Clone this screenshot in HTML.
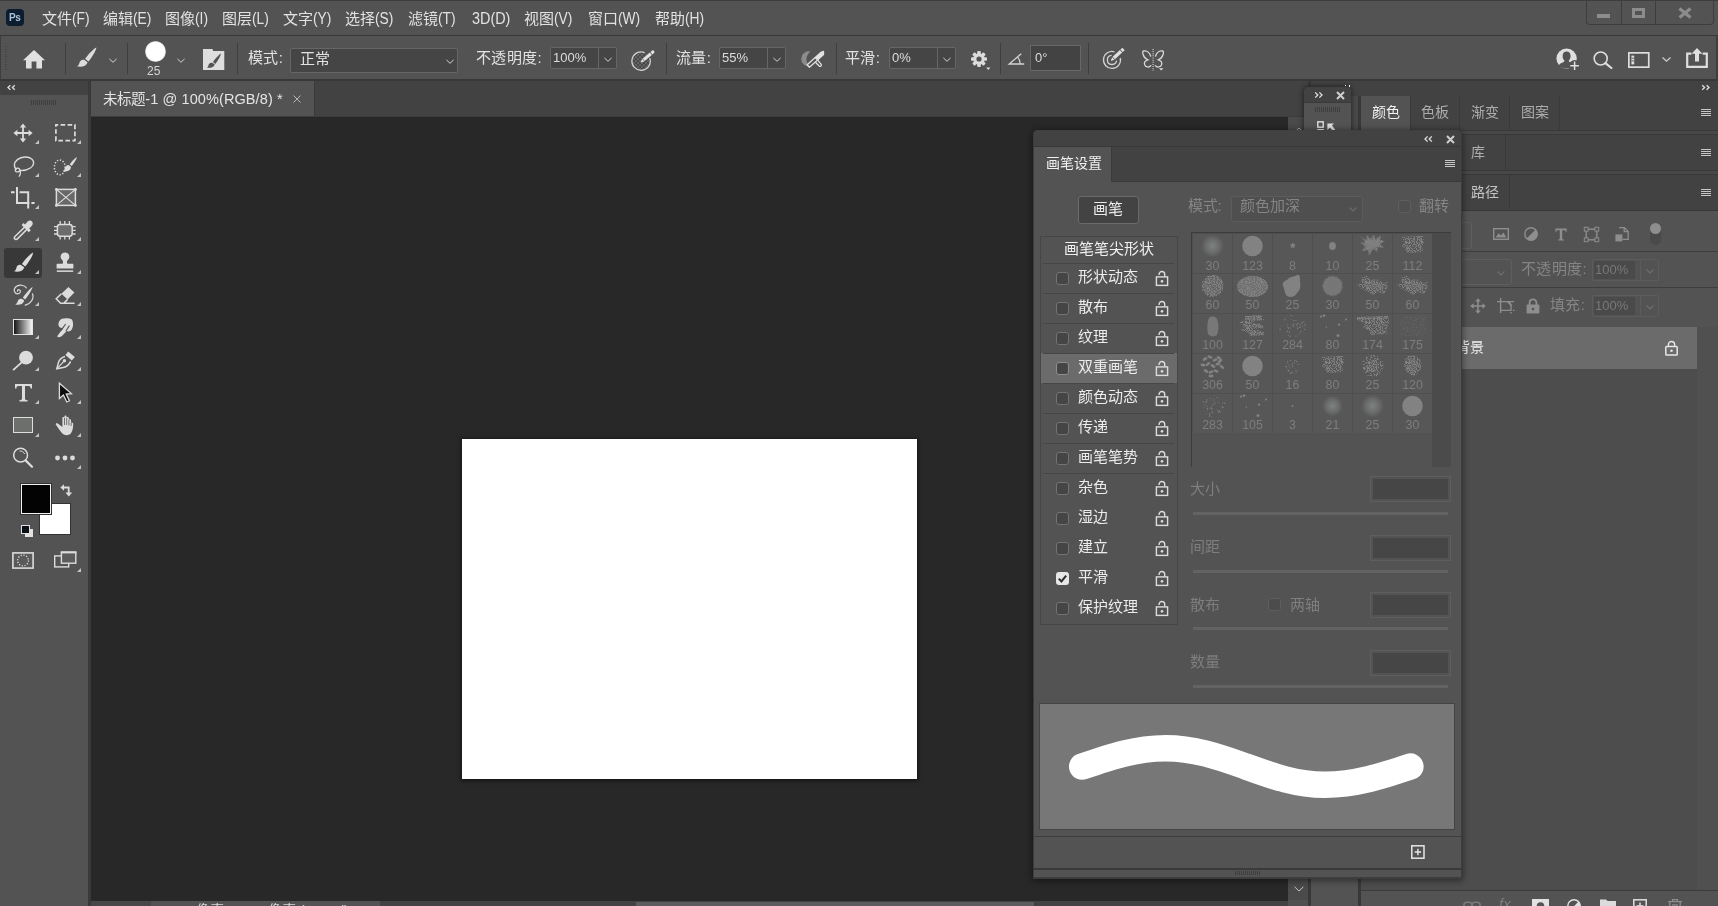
<!DOCTYPE html>
<html lang="zh-CN">
<head>
<meta charset="utf-8">
<title>未标题-1 @ 100%(RGB/8) *</title>
<style>
*{box-sizing:border-box;margin:0;padding:0}
html,body{width:1718px;height:906px;overflow:hidden;background:#535353}
body{font-family:"Liberation Sans",sans-serif;font-size:14px;color:#dcdcdc;position:relative;line-height:1}
#root{position:absolute;left:0;top:0;width:1718px;height:906px;will-change:transform;overflow:hidden}
.a{position:absolute}
.t{position:absolute;white-space:nowrap;line-height:16px;height:16px}
svg{position:absolute;overflow:visible}
/* ---------- top bars ---------- */
#menubar{left:0;top:0;width:1718px;height:36px;background:#535353;border-top:1px solid #3d3d3d;border-bottom:1px solid #383838}
#optbar{left:0;top:36px;width:1718px;height:45px;background:#535353;border-bottom:2px solid #383838;border-left:1px solid #3e3e3e;border-right:2px solid #3e3e3e}
.cj{font-size:15px;letter-spacing:.2px}
.la{display:inline-block;font-size:16px;transform:scaleX(.86);transform-origin:0 50%}
.mi{position:absolute;top:11px;line-height:16px;font-size:13px;color:#e2e2e2;white-space:nowrap}
.ol{font-size:15px;letter-spacing:.4px;color:#e2e2e2}
.sep{position:absolute;width:1px;background:#3e3e3e;top:43px;height:31px}
.fld{position:absolute;background:#454545;border:1px solid #666;border-radius:2px}
/* ---------- work area ---------- */
#tabstrip{left:0;top:81px;width:1718px;height:36px;background:#424242;border-bottom:1px solid #3c3c3c}
#canvas{left:91px;top:117px;width:1197px;height:784px;background:#282828}
#doc{left:462px;top:439px;width:455px;height:340px;background:#fff;box-shadow:0 1px 4px 1px rgba(0,0,0,.5)}
#tools{left:0;top:81px;width:88px;height:825px;background:#535353}
#toolsedge{left:88px;top:81px;width:3px;height:825px;background:#3a3a3a}
</style>
</head>
<body>
<div id="root">
<!-- ===== base chrome ===== -->
<div class="a" id="tabstrip"></div>
<div class="a" id="canvas"></div>
<div class="a" id="doc"></div>
<div class="a" id="tools"></div>
<div class="a" id="toolsedge"></div>
<div class="a" id="menubar"></div>
<div class="a" id="optbar"></div>
<!-- MENU -->
<div class="a" style="left:6px;top:9px;width:18px;height:17px;background:#0b1d2f;border-radius:4px"></div>
<div class="t" style="left:9px;top:10px;font-size:10px;font-weight:bold;color:#a9c3dc;letter-spacing:-0.3px">Ps</div>
<div class="mi" style="left:42px"><span class="cj">文件</span><span class="la">(F)</span></div>
<div class="mi" style="left:103px"><span class="cj">编辑</span><span class="la">(E)</span></div>
<div class="mi" style="left:165px"><span class="cj">图像</span><span class="la">(I)</span></div>
<div class="mi" style="left:222px"><span class="cj">图层</span><span class="la">(L)</span></div>
<div class="mi" style="left:283px"><span class="cj">文字</span><span class="la">(Y)</span></div>
<div class="mi" style="left:345px"><span class="cj">选择</span><span class="la">(S)</span></div>
<div class="mi" style="left:408px"><span class="cj">滤镜</span><span class="la">(T)</span></div>
<div class="mi" style="left:471.5px"><span class="la" style="transform:scaleX(.9)">3D(D)</span></div>
<div class="mi" style="left:524px"><span class="cj">视图</span><span class="la">(V)</span></div>
<div class="mi" style="left:588px"><span class="cj">窗口</span><span class="la">(W)</span></div>
<div class="mi" style="left:655px"><span class="cj">帮助</span><span class="la">(H)</span></div>
<div class="a" style="left:1586px;top:0;width:128px;height:25px;border:1px solid #3d3d3d;border-top:none;border-radius:0 0 4px 4px"></div>
<div class="a" style="left:1621px;top:1px;width:1px;height:23px;background:#3d3d3d"></div>
<div class="a" style="left:1655px;top:1px;width:1px;height:23px;background:#3d3d3d"></div>
<div class="a" style="left:1597px;top:14px;width:13px;height:4px;background:#8c8c8c"></div>
<div class="a" style="left:1632px;top:8px;width:13px;height:10px;border:3px solid #8c8c8c"></div>
<svg style="left:1678px;top:8px" width="14" height="10" viewBox="0 0 14 10"><path d="M1.5 0.5 L12.5 9.5 M12.5 0.5 L1.5 9.5" stroke="#8c8c8c" stroke-width="3.2" fill="none"/></svg>
<!-- OPTIONS -->
<div class="a" style="left:5px;top:46px;width:2px;height:25px;background:repeating-linear-gradient(#444 0 1px,transparent 1px 2.55px)"></div>
<svg style="left:23px;top:50px" width="22" height="19" viewBox="0 0 22 19"><path d="M11 0 L22 10.2 L19 10.2 L19 18.5 L13.4 18.5 L13.4 11.5 L8.6 11.5 L8.6 18.5 L3 18.5 L3 10.2 L0 10.2 Z" fill="#e0e0e0"/></svg>
<div class="sep" style="left:65px"></div>
<svg style="left:77px;top:47px" width="20" height="20" viewBox="0 0 20 20"><path d="M19.4 0.4 C16.8 1.4 11 7.4 8.1 11.8 L11.5 14.5 C14.7 10.6 19 3.8 19.4 0.4 Z M7.2 12.8 C4.8 12.2 2.8 13.8 2.4 16 C2.1 17.6 1.2 18.6 0 19.2 C3.4 20.2 8.4 19.7 10 16.5 C10.5 15.6 10.6 15.3 10.5 15.2 Z" fill="#dcdcdc"/></svg>
<svg style="left:108.5px;top:57.6px" width="8" height="5" viewBox="0 0 8 5"><path d="M0.4 0.9 L4 4.3 L7.6 0.9" stroke="#d2d2d2" stroke-width="1" fill="none"/></svg>
<div class="sep" style="left:127px"></div>
<div class="a" style="left:145px;top:41px;width:21px;height:21px;border-radius:50%;background:radial-gradient(circle,#fff 0 62%,rgba(255,255,255,.65) 70%,rgba(255,255,255,0) 74%)"></div>
<div class="t" style="left:147px;top:63px;font-size:12px;color:#d6d6d6">25</div>
<svg style="left:177px;top:57.6px" width="8" height="5" viewBox="0 0 8 5"><path d="M0.4 0.9 L4 4.3 L7.6 0.9" stroke="#d2d2d2" stroke-width="1" fill="none"/></svg>
<svg style="left:203px;top:49px" width="22" height="21" viewBox="0 0 22 21"><path d="M0 0 H9.4 L10.2 2 H21.3 V21 H0 Z" fill="#dedede"/><path d="M17.9 4.5 C16 5.6 12 10 10 13 L12.4 15 C14.6 12 17.6 7.4 17.9 4.5 Z M9.2 13.8 C7.4 13.4 5.8 14.6 5.5 16.2 C5.3 17.4 4.6 18 3.8 18.5 C6.4 19.2 10 18.8 11.3 16.4 C11.7 15.6 11.8 15.4 11.6 15.3 Z" fill="#535353"/></svg>
<div class="sep" style="left:237px"></div>
<div class="t ol" style="left:248px;top:50px">模式:</div>
<div class="fld" style="left:290px;top:48px;width:168px;height:25px"></div>
<div class="t ol" style="left:300px;top:51px">正常</div>
<svg style="left:446px;top:59px" width="8" height="5" viewBox="0 0 8 5"><path d="M0.4 0.9 L4 4.3 L7.6 0.9" stroke="#d2d2d2" stroke-width="1" fill="none"/></svg>
<div class="t ol" style="left:476px;top:50px">不透明度:</div>
<div class="fld" style="left:550px;top:47px;width:67px;height:22px"></div>
<div class="a" style="left:598px;top:48px;width:1px;height:20px;background:#666"></div>
<div class="t" style="left:553px;top:50px;font-size:13px">100%</div>
<svg style="left:604px;top:57px" width="8" height="5" viewBox="0 0 8 5"><path d="M0.4 0.9 L4 4.3 L7.6 0.9" stroke="#d2d2d2" stroke-width="1" fill="none"/></svg>
<svg style="left:631px;top:48px" width="24" height="23" viewBox="0 0 24 23"><defs><pattern id="chk" width="4" height="4" patternUnits="userSpaceOnUse"><rect width="4" height="4" fill="#4a4a4a"/><rect width="2" height="2" fill="#626262"/><rect x="2" y="2" width="2" height="2" fill="#626262"/></pattern></defs><circle cx="10.1" cy="13.1" r="8.8" fill="url(#chk)"/><path d="M18.81 10.13 A9.2 9.2 0 1 1 13.55 4.57" fill="none" stroke="#d2d2d2" stroke-width="1.3"/><path d="M9.5 14.6 L13.28 13.48 L11.2 11.04 Z" fill="#e6e6e6"/><path d="M13.74 13.09 L11.66 10.65 L18.81 4.53 L20.89 6.97 Z" fill="#e2e2e2"/><path d="M21.5 6.45 L19.42 4.01 L21.2 2.4 C22.4 1.6 24 3.4 23.2 4.8 Z" fill="#e2e2e2"/></svg>
<div class="sep" style="left:666px"></div>
<div class="t ol" style="left:676px;top:50px">流量:</div>
<div class="fld" style="left:719px;top:47px;width:67px;height:22px"></div>
<div class="a" style="left:767px;top:48px;width:1px;height:20px;background:#666"></div>
<div class="t" style="left:722px;top:50px;font-size:13px">55%</div>
<svg style="left:773px;top:57px" width="8" height="5" viewBox="0 0 8 5"><path d="M0.4 0.9 L4 4.3 L7.6 0.9" stroke="#d2d2d2" stroke-width="1" fill="none"/></svg>
<svg style="left:800px;top:49px" width="26" height="20" viewBox="0 0 26 20"><path d="M10.6 2.6 A7.54 7.54 0 1 0 9.6 17.4 A9.29 9.29 0 0 1 10.6 2.6 Z" fill="#8c8c8c"/><path d="M9.43 18.27 L7.17 15.73 L21.07 3.33 C22.6 2.2 24.4 4.4 23.33 5.87 Z" fill="none" stroke="#e2e2e2" stroke-width="1.3" stroke-linejoin="round"/><path d="M17.08 11.45 L14.82 8.91 L21.07 3.33 C22.6 2.2 24.4 4.4 23.33 5.87 Z" fill="#e2e2e2"/><path d="M15.4 13.2 L19.2 17 C20.4 18 22 16.6 21.2 15.4 L17.6 11.2" fill="none" stroke="#e2e2e2" stroke-width="1.3"/><circle cx="23.2" cy="2.8" r="1.1" fill="#e6e6e6"/></svg>
<div class="sep" style="left:836px"></div>
<div class="t ol" style="left:845px;top:50px">平滑:</div>
<div class="fld" style="left:889px;top:47px;width:67px;height:22px"></div>
<div class="a" style="left:937px;top:48px;width:1px;height:20px;background:#666"></div>
<div class="t" style="left:892px;top:50px;font-size:13px">0%</div>
<svg style="left:943px;top:57px" width="8" height="5" viewBox="0 0 8 5"><path d="M0.4 0.9 L4 4.3 L7.6 0.9" stroke="#d2d2d2" stroke-width="1" fill="none"/></svg>
<svg style="left:970px;top:50px" width="21" height="21" viewBox="0 0 21 21"><g transform="translate(9 9)" fill="#dcdcdc"><circle r="5.7"/><rect x="-1.8" y="-8" width="3.6" height="16" rx="1"/><rect x="-1.8" y="-8" width="3.6" height="16" rx="1" transform="rotate(45)"/><rect x="-1.8" y="-8" width="3.6" height="16" rx="1" transform="rotate(90)"/><rect x="-1.8" y="-8" width="3.6" height="16" rx="1" transform="rotate(135)"/><circle r="2.6" fill="#535353"/></g><path d="M16.2 17.6 H20.4 L18.3 20 Z" fill="#dcdcdc"/></svg>
<div class="sep" style="left:1000px"></div>
<svg style="left:1008px;top:53px" width="17" height="12" viewBox="0 0 17 12"><path d="M13.2 0.8 L1.2 11 H16.2" stroke="#d4d4d4" stroke-width="1.3" fill="none"/><path d="M9.6 4.2 C11.4 6 12.2 8.4 12.2 11" stroke="#d4d4d4" stroke-width="1.2" fill="none"/></svg>
<div class="a" style="left:1030px;top:45px;width:51px;height:26px;background:#434343;border:1px solid #676767"></div>
<div class="t" style="left:1035px;top:50px;font-size:13px">0°</div>
<div class="sep" style="left:1088px"></div>
<svg style="left:1102px;top:48px" width="23" height="22" viewBox="0 0 23 22"><path d="M12.48 3.77 A8.5 8.5 0 1 0 18.28 9.99" stroke="#d2d2d2" stroke-width="1.3" fill="none"/><path d="M9.6 7.32 A4.6 4.6 0 1 0 14.53 12.7" stroke="#d2d2d2" stroke-width="1.3" fill="none"/><path d="M8.7 12.95 L12.49 11.72 L10.16 9.24 Z" fill="#e4e4e4"/><path d="M13.00 11.24 L10.67 8.76 L17.86 1.99 L20.19 4.47 Z" fill="#e0e0e0"/><path d="M20.77 3.92 L18.44 1.44 L20.33 -0.34 L22.67 2.14 Z" fill="#e0e0e0"/></svg>
<svg style="left:1142px;top:48px" width="23" height="24" viewBox="0 0 23 24"><path d="M8.7 8.2 C7.8 5 5 2.6 1.6 3 C0.4 3.2 0.6 5.2 1.2 6.8 C2 9.2 3.4 11 5.8 11.8 C3.4 12.6 2 14.6 2.6 16.6 C3.4 19.2 7.2 20 8.8 17.6 M 13.5 8.2 C 14.4 5.0 17.2 2.6 20.6 3.0 C 21.8 3.2 21.6 5.2 21.0 6.8 C 20.2 9.2 18.8 11.0 16.4 11.8 C 18.8 12.6 20.2 14.6 19.6 16.6 C 18.8 19.2 15.0 20.0 13.4 17.6" stroke="#d8d8d8" stroke-width="1.3" fill="none" stroke-linecap="round"/><path d="M11.1 0.9 V23" stroke="#dcdcdc" stroke-width="1.1" stroke-dasharray="1 1.15" fill="none"/><path d="M17 20.3 H21.4 L19.2 22.6 Z" fill="#dcdcdc"/></svg>
<svg style="left:1556px;top:48px" width="24" height="23" viewBox="0 0 24 23"><circle cx="10.6" cy="10.6" r="10.2" fill="#e0e0e0"/><path d="M10.6 3.6 C13.2 3.6 14.6 5.6 14.6 8.2 C14.6 10 13.8 11.6 12.8 12.6 C12.8 13.6 13.4 14.2 15 14.8 C17 15.6 18 16.4 18.4 17.6 C16.4 19.6 13.6 20.4 10.6 20.4 C7.6 20.4 4.8 19.6 2.8 17.6 C3.2 16.4 4.2 15.6 6.2 14.8 C7.8 14.2 8.4 13.6 8.4 12.6 C7.4 11.6 6.6 10 6.6 8.2 C6.6 5.6 8 3.6 10.6 3.6 Z" fill="#535353"/><circle cx="18.6" cy="17.6" r="5.6" fill="#535353"/><path d="M18.6 13.4 V22 M14.3 17.7 H22.9" stroke="#e0e0e0" stroke-width="1.5"/></svg>
<svg style="left:1592.5px;top:51px" width="20" height="18" viewBox="0 0 20 18"><circle cx="7.7" cy="7.5" r="6.5" stroke="#dedede" stroke-width="1.6" fill="none"/><path d="M12.4 12.2 L18.4 17" stroke="#dedede" stroke-width="2.2" stroke-linecap="round"/></svg>
<svg style="left:1627.5px;top:51.8px" width="22" height="16" viewBox="0 0 22 16"><rect x="0.85" y="0.85" width="19.9" height="14.3" stroke="#dedede" stroke-width="1.7" fill="none"/><rect x="3.4" y="3.6" width="2.8" height="8.8" fill="#dedede"/><path d="M3.4 6.2 H6.2 M3.4 8.9 H6.2" stroke="#535353" stroke-width="0.9"/></svg>
<svg style="left:1662px;top:57px" width="9" height="5" viewBox="0 0 9 5"><path d="M0.5 0.5 L4.5 4.2 L8.5 0.5" stroke="#cfcfcf" stroke-width="1.2" fill="none"/></svg>
<svg style="left:1686px;top:47px" width="22" height="21" viewBox="0 0 22 21"><path d="M1.2 5.6 V19.8 H20.8 V5.6 M0.1 6.6 H5.4 M16.6 6.6 H21.9" stroke="#dedede" stroke-width="2.2" fill="none"/><path d="M11 1 L16.4 6.8 H13 V14.6 H9 V6.8 H5.6 Z" fill="#dedede"/></svg>
<!-- DOCTAB -->
<div class="a" style="left:91px;top:81px;width:224px;height:35px;background:#535353;border-right:1px solid #3a3a3a"></div>
<div class="t" style="left:103px;top:90.6px;color:#e4e4e4;font-size:14.5px;letter-spacing:.1px">未标题-1 @ 100%(RGB/8) *</div>
<svg style="left:293px;top:95px" width="8" height="8" viewBox="0 0 8 8"><path d="M0.5 0.5 L7.5 7.5 M7.5 0.5 L0.5 7.5" stroke="#b8b8b8" stroke-width="1" fill="none"/></svg>
<!-- TOOLS -->
<div class="a" style="left:0;top:81px;width:88px;height:14px;background:#424242"></div>
<svg style="left:7px;top:85px" width="9" height="5" viewBox="0 0 9 5"><path d="M3.4 0.3 L1 2.5 L3.4 4.7 M7.8 0.3 L5.4 2.5 L7.8 4.7" stroke="#e0e0e0" stroke-width="1.3" fill="none"/></svg>
<div class="a" style="left:31px;top:100px;width:25px;height:5px;background:repeating-linear-gradient(90deg,#3e3e3e 0 1px,transparent 1px 2px)"></div>
<div class="a" style="left:4px;top:247.5px;width:38px;height:30px;background:#383838;border-radius:3px"></div>
<svg style="left:13px;top:123px" width="20" height="20" viewBox="0 0 20 20"><path d="M10 0.4 L13.2 4.4 H10.9 V9.1 H15.6 V6.8 L19.6 10 L15.6 13.2 V10.9 H10.9 V15.6 H13.2 L10 19.6 L6.8 15.6 H9.1 V10.9 H4.4 V13.2 L0.4 10 L4.4 6.8 V9.1 H9.1 V4.4 H6.8 Z" fill="#dcdcdc"/></svg>
<svg style="left:35px;top:140px" width="4" height="4" viewBox="0 0 4 4"><path d="M4 0 V4 H0 Z" fill="#c4c4bc"/></svg>
<svg style="left:55px;top:124px" width="21" height="18" viewBox="0 0 21 18"><rect x="0.9" y="0.9" width="19" height="15.8" fill="none" stroke="#dcdcdc" stroke-width="1.7" stroke-dasharray="4.6 2.4" stroke-dashoffset="2.3"/></svg>
<svg style="left:77px;top:140px" width="4" height="4" viewBox="0 0 4 4"><path d="M4 0 V4 H0 Z" fill="#c4c4bc"/></svg>
<svg style="left:13px;top:156px" width="22" height="22" viewBox="0 0 22 22"><path d="M3.6 13.6 C0.6 11.4 0.4 6.8 4.4 3.6 C8.6 0.4 15.4 0.2 18.8 3 C21.8 5.6 21 9.6 17.4 12 C14 14.2 9.6 14.8 6.6 14.4" fill="none" stroke="#dcdcdc" stroke-width="1.4"/><path d="M6.8 14.2 C7 12.4 5 11.6 3.4 12.4 C1.8 13.2 1.8 15.2 3.4 15.8 C4.8 16.3 6.4 15.6 6.8 14.2 C7.6 16 8 18.4 5.8 20.6" fill="none" stroke="#dcdcdc" stroke-width="1.3"/></svg>
<svg style="left:35px;top:173px" width="4" height="4" viewBox="0 0 4 4"><path d="M4 0 V4 H0 Z" fill="#c4c4bc"/></svg>
<svg style="left:53px;top:156px" width="25" height="20" viewBox="0 0 25 20"><ellipse cx="6.8" cy="11.4" rx="5.4" ry="7.4" fill="none" stroke="#dcdcdc" stroke-width="1.5" stroke-dasharray="1.3 1.7"/><path d="M24 1 C22 2 18.6 5.6 16.8 8.4 L18.8 10 C20.8 7.4 23.4 3.6 24 1 Z M16 9.2 C14.2 8.8 12.8 10 12.4 11.6 C12.1 12.8 11.2 14.4 9.8 15.2 C12.8 16.2 16.4 15.2 17.6 12.8 C18 11.8 18 11 17.8 10.8 Z" fill="#dcdcdc"/></svg>
<svg style="left:77px;top:173px" width="4" height="4" viewBox="0 0 4 4"><path d="M4 0 V4 H0 Z" fill="#c4c4bc"/></svg>
<svg style="left:11px;top:187px" width="24" height="22" viewBox="0 0 24 22"><path d="M0 5.2 H3.6 M6 0 V16 H18.4 M8.6 5.2 H17.2 V21.4 M20.4 16 H23.6" fill="none" stroke="#dcdcdc" stroke-width="2"/></svg>
<svg style="left:35px;top:205px" width="4" height="4" viewBox="0 0 4 4"><path d="M4 0 V4 H0 Z" fill="#c4c4bc"/></svg>
<svg style="left:55px;top:188px" width="22" height="19" viewBox="0 0 22 19"><rect x="1.4" y="1.4" width="19" height="16" fill="#686868" stroke="#dcdcdc" stroke-width="1.5"/><path d="M1.4 1.4 L20.4 17.4 M20.4 1.4 L1.4 17.4" stroke="#dcdcdc" stroke-width="1.2"/><circle cx="1.4" cy="1.4" r="1.4" fill="#dcdcdc"/><circle cx="20.4" cy="1.4" r="1.4" fill="#dcdcdc"/><circle cx="1.4" cy="17.4" r="1.4" fill="#dcdcdc"/><circle cx="20.4" cy="17.4" r="1.4" fill="#dcdcdc"/></svg>
<svg style="left:13px;top:220px" width="21" height="20" viewBox="0 0 21 20"><path d="M11.4 7.4 L2.2 16.2 C1.2 17.2 1.2 18.4 1.8 19 C2.4 19.6 3.6 19.6 4.6 18.6 L13.6 9.6" fill="none" stroke="#dcdcdc" stroke-width="1.5"/><path d="M8.6 5 L10.6 3 L12 4.4 L14.4 1.8 C15.8 0.4 17.8 0.2 19 1.4 C20.2 2.6 20 4.6 18.6 6 L16.2 8.6 L17.8 10.2 L15.8 12.2 Z" fill="#dcdcdc"/></svg>
<svg style="left:35px;top:237px" width="4" height="4" viewBox="0 0 4 4"><path d="M4 0 V4 H0 Z" fill="#c4c4bc"/></svg>
<svg style="left:54px;top:221px" width="22" height="19" viewBox="0 0 22 19"><rect x="3.4" y="3.4" width="14.8" height="11.8" rx="2.6" fill="#6c6c6c" stroke="#dcdcdc" stroke-width="1.5"/><path d="M6.2 0 V3 M6.2 15.6 V18.6 M10.8 0 V3 M10.8 15.6 V18.6 M15.4 0 V3 M15.4 15.6 V18.6 M0 5.6 H3 M18.6 5.6 H21.6 M0 9.3 H3 M18.6 9.3 H21.6 M0 13 H3 M18.6 13 H21.6 " stroke="#dcdcdc" stroke-width="1.3"/></svg>
<svg style="left:77px;top:237px" width="4" height="4" viewBox="0 0 4 4"><path d="M4 0 V4 H0 Z" fill="#c4c4bc"/></svg>
<svg style="left:14px;top:252px" width="20" height="20" viewBox="0 0 20 20"><path d="M19.2 0.6 C16.6 1.6 10.8 7.6 7.9 12 L11.2 14.6 C14.4 10.6 18.8 4 19.2 0.6 Z M7 13 C4.8 12.4 2.8 13.8 2.4 16 C2.1 17.5 1.2 18.7 0 19.3 C3.4 20.2 8.2 19.7 9.7 16.6 C10.2 15.7 10.3 15.4 10.2 15.3 Z" fill="#dcdcdc"/></svg>
<svg style="left:35px;top:270px" width="4" height="4" viewBox="0 0 4 4"><path d="M4 0 V4 H0 Z" fill="#c4c4bc"/></svg>
<svg style="left:56px;top:252px" width="18" height="21" viewBox="0 0 18 21"><path d="M9 0.6 C11.6 0.6 13.4 2.4 13.4 4.8 C13.4 6.4 12.4 7.6 11.4 8.4 C10.8 9 10.8 10.4 11.4 11.8 H16.4 C17 11.8 17.4 12.2 17.4 12.8 V16.4 H0.6 V12.8 C0.6 12.2 1 11.8 1.6 11.8 H6.6 C7.2 10.4 7.2 9 6.6 8.4 C5.6 7.6 4.6 6.4 4.6 4.8 C4.6 2.4 6.4 0.6 9 0.6 Z" fill="#dcdcdc"/><rect x="0.8" y="18.4" width="16.4" height="1.5" fill="#dcdcdc"/></svg>
<svg style="left:77px;top:270px" width="4" height="4" viewBox="0 0 4 4"><path d="M4 0 V4 H0 Z" fill="#c4c4bc"/></svg>
<svg style="left:13px;top:284px" width="22" height="23" viewBox="0 0 22 23"><path d="M19.6 3 C17.6 4 12.4 9.8 9.8 13.8 L12.2 15.6 C15 11.8 19 5.8 19.6 3 Z M8.8 14.8 C6.8 14.2 5 15.6 4.6 17.4 C4.3 18.8 3.4 19.8 2.2 20.4 C5 21.2 9.2 20.8 10.6 18 C11.2 17 11.2 16.4 11 16.3 Z" fill="#dcdcdc"/><path d="M13.6 4.2 C11.6 0.8 5.6 0.2 2.6 3 C-0.2 5.8 1.6 9.8 4.8 9.8 C7.4 9.8 8.4 6.6 6.2 5.8 C4.8 5.4 4 6.8 4.8 7.6" fill="none" stroke="#dcdcdc" stroke-width="1.2"/><path d="M19.4 9.4 C21.4 14 18.4 19.8 11.8 21.4" fill="none" stroke="#dcdcdc" stroke-width="1.1"/></svg>
<svg style="left:35px;top:302px" width="4" height="4" viewBox="0 0 4 4"><path d="M4 0 V4 H0 Z" fill="#c4c4bc"/></svg>
<svg style="left:55px;top:286px" width="21" height="19" viewBox="0 0 21 19"><path d="M13.4 1 L19.4 6.6 L12.6 13.4 L6.4 7.8 Z" fill="#dcdcdc"/><path d="M6.4 7.8 L1.2 12.8 L5.6 17.2 H8.8 L12.6 13.4 M8.8 17.2 H19.6" fill="none" stroke="#dcdcdc" stroke-width="1.5"/></svg>
<svg style="left:77px;top:302px" width="4" height="4" viewBox="0 0 4 4"><path d="M4 0 V4 H0 Z" fill="#c4c4bc"/></svg>
<div class="a" style="left:13px;top:319px;width:20px;height:16px;border:1px solid #e4e4e4;background:linear-gradient(90deg,#151515,#f4f4f4)"></div>
<svg style="left:35px;top:335px" width="4" height="4" viewBox="0 0 4 4"><path d="M4 0 V4 H0 Z" fill="#c4c4bc"/></svg>
<svg style="left:56px;top:318px" width="18" height="20" viewBox="0 0 18 20"><path d="M6 0.8 C9 -0.2 13.6 0.2 16 1.4 C17.6 4.4 17.4 9.2 15.6 11.8 C14.4 13.4 12 14 10.8 13 L6.2 17.8 C4.8 19.4 2.6 19.6 1 18.6 L7.6 9.6 C5.2 10.6 3.2 9.6 2.6 7.6 C2 5 3.4 1.8 6 0.8 Z" fill="#dcdcdc"/><path d="M9.6 6 L5 12.6 M13.4 7.6 L9.8 13.2" stroke="#535353" stroke-width="1.1"/></svg>
<svg style="left:77px;top:335px" width="4" height="4" viewBox="0 0 4 4"><path d="M4 0 V4 H0 Z" fill="#c4c4bc"/></svg>
<svg style="left:12px;top:350px" width="22" height="21" viewBox="0 0 22 21"><circle cx="14" cy="7.7" r="6.9" fill="#dcdcdc"/><path d="M9.4 12.6 L1.6 19.6" stroke="#dcdcdc" stroke-width="1.9" stroke-linecap="round"/></svg>
<svg style="left:35px;top:367px" width="4" height="4" viewBox="0 0 4 4"><path d="M4 0 V4 H0 Z" fill="#c4c4bc"/></svg>
<svg style="left:56px;top:351px" width="20" height="19" viewBox="0 0 20 19"><path d="M12.2 0.6 L18.8 6 L15.8 9.4 L9.4 4 Z" fill="#dcdcdc"/><path d="M9 5.4 C5.6 6.2 3.4 8.6 2.4 11.6 L0.8 17.8 L7.2 16.6 C10.4 15.8 13.2 13.8 14.6 10.4" fill="none" stroke="#dcdcdc" stroke-width="1.5"/><path d="M1 17.6 L7.6 10.6" stroke="#dcdcdc" stroke-width="1.2"/><circle cx="8.4" cy="9.8" r="1.7" fill="#dcdcdc"/></svg>
<svg style="left:77px;top:367px" width="4" height="4" viewBox="0 0 4 4"><path d="M4 0 V4 H0 Z" fill="#c4c4bc"/></svg>
<svg style="left:14px;top:383px" width="19" height="19" viewBox="0 0 19 19"><path d="M1 1 H18 V5.4 H16.6 C16.4 3.8 16 3 14.6 3 H11 V15.4 C11 16.6 11.6 17 13.6 17.2 V18.6 H5.4 V17.2 C7.4 17 8 16.6 8 15.4 V3 H4.4 C3 3 2.6 3.8 2.4 5.4 H1 Z" fill="#dcdcdc"/></svg>
<svg style="left:35px;top:400px" width="4" height="4" viewBox="0 0 4 4"><path d="M4 0 V4 H0 Z" fill="#c4c4bc"/></svg>
<svg style="left:58px;top:382px" width="15" height="21" viewBox="0 0 15 21"><path d="M1.4 1.2 V16.6 L5.4 13 L8.8 20 L11.4 18.8 L8.2 12 L13.4 11.6 Z" fill="#0a0c10" stroke="#dcdcdc" stroke-width="1.3" stroke-linejoin="miter"/></svg>
<svg style="left:77px;top:400px" width="4" height="4" viewBox="0 0 4 4"><path d="M4 0 V4 H0 Z" fill="#c4c4bc"/></svg>
<div class="a" style="left:13px;top:417px;width:20px;height:16px;border:1.5px solid #dedede;background:#6d6f6d"></div>
<svg style="left:35px;top:433px" width="4" height="4" viewBox="0 0 4 4"><path d="M4 0 V4 H0 Z" fill="#c4c4bc"/></svg>
<svg style="left:55px;top:415px" width="20" height="21" viewBox="0 0 20 21"><path d="M7.4 12 V3 C7.4 1.6 9.4 1.6 9.4 3 V1.8 C9.4 0.2 11.6 0.2 11.6 1.8 V3 C11.6 1.6 13.8 1.6 13.8 3 V5.4 C13.8 4 16 4 16 5.4 L16.4 8.6 C16.4 7.6 18.2 7.6 18.2 8.8 C18.2 13 17.6 16.2 15.8 18.6 C14 20.6 9.6 20.8 7.6 18.8 C5.4 16.6 3 13 0.8 9.6 C0.2 8.4 1.8 7.6 2.8 8.6 Z" fill="#dcdcdc"/><path d="M9.5 3 V10 M11.7 3 V10 M13.9 5 V10.4 M16.1 8 V11" stroke="#535353" stroke-width="0.8"/></svg>
<svg style="left:77px;top:433px" width="4" height="4" viewBox="0 0 4 4"><path d="M4 0 V4 H0 Z" fill="#c4c4bc"/></svg>
<svg style="left:12px;top:447px" width="22" height="22" viewBox="0 0 22 22"><circle cx="8.6" cy="8.2" r="6.9" fill="none" stroke="#dcdcdc" stroke-width="1.5"/><path d="M13.6 13.4 L20 19.8" stroke="#dcdcdc" stroke-width="2.2" stroke-linecap="round"/><path d="M7.6 4 C9.8 3.8 11.8 5 12.6 7" fill="none" stroke="#dcdcdc" stroke-width="1"/></svg>
<svg style="left:54px;top:455px" width="22" height="6" viewBox="0 0 22 6"><circle cx="3.5" cy="3" r="2.4" fill="#dcdcdc"/><circle cx="11" cy="3" r="2.4" fill="#dcdcdc"/><circle cx="18.5" cy="3" r="2.4" fill="#dcdcdc"/></svg>
<svg style="left:77px;top:465px" width="4" height="4" viewBox="0 0 4 4"><path d="M4 0 V4 H0 Z" fill="#c4c4bc"/></svg>
<div class="a" style="left:39px;top:503px;width:32px;height:32px;background:#fff;border:1px solid #333"></div>
<div class="a" style="left:20px;top:483px;width:32px;height:32px;background:#020302;border:1px solid #333;box-shadow:inset 0 0 0 1px #f2f2f2"></div>
<svg style="left:60px;top:484px" width="13" height="13" viewBox="0 0 13 13"><path d="M4 0.2 V2.6 H9.6 V8.6 H12.2 L8.8 12.6 L5.4 8.6 H7.8 V4.4 H4 V6.8 L0.4 3.5 Z" fill="#dcdcdc"/></svg>
<div class="a" style="left:25px;top:529px;width:8px;height:8px;background:#e2e2e2"></div>
<div class="a" style="left:21px;top:525px;width:9px;height:9px;background:#0a1016;border:1px solid #e2e2e2"></div>
<svg style="left:12px;top:552px" width="22" height="17" viewBox="0 0 22 17"><rect x="0.9" y="0.9" width="20.2" height="15.2" fill="#5a5a5a" stroke="#dcdcdc" stroke-width="1.6"/><circle cx="11" cy="8.5" r="5.4" fill="none" stroke="#dcdcdc" stroke-width="1.3" stroke-dasharray="1.2 1.6"/></svg>
<svg style="left:54px;top:551px" width="23" height="17" viewBox="0 0 23 17"><rect x="0.7" y="4.9" width="14" height="11" fill="#535353" stroke="#dcdcdc" stroke-width="1.4"/><rect x="7.4" y="1.2" width="14.4" height="11" fill="#5c5c5c" stroke="#dcdcdc" stroke-width="1.4"/><rect x="6.8" y="0.4" width="15.6" height="2" fill="#dcdcdc"/></svg>
<svg style="left:77px;top:568px" width="4" height="4" viewBox="0 0 4 4"><path d="M4 0 V4 H0 Z" fill="#c4c4bc"/></svg>
<!-- STATUS -->
<div class="a" style="left:91px;top:901px;width:1197px;height:5px;background:#424242"></div>
<div class="a" style="left:91px;top:901px;width:60px;height:5px;background:#474747"></div>
<div class="a" style="left:151px;top:901px;width:229px;height:5px;background:#535353;overflow:hidden"><div class="t" style="left:17px;top:2.2px;color:#d8d8d8;font-size:14.5px">455 像素 x 340 像素 (72 ppi)</div></div>
<div class="a" style="left:636px;top:902px;width:398px;height:4px;background:#5c5c5c"></div>
<!-- vertical scrollbar -->
<div class="a" style="left:1288px;top:117px;width:20px;height:789px;background:#4a4a4a"></div>
<svg style="left:1294px;top:127px" width="10" height="6" viewBox="0 0 10 6"><path d="M0.6 5.2 L5 1 L9.4 5.2" stroke="#a8a8a8" stroke-width="1" fill="none"/></svg>
<svg style="left:1294px;top:886px" width="10" height="6" viewBox="0 0 10 6"><path d="M0.6 0.8 L5 5 L9.4 0.8" stroke="#c4c4c4" stroke-width="1" fill="none"/></svg>
<div class="a" style="left:1288px;top:900px;width:20px;height:6px;background:#505050"></div>
<!-- RIGHTDOCK -->
<div class="a" style="left:1308px;top:81px;width:3px;height:825px;background:#383838"></div>
<div class="a" style="left:1311px;top:81px;width:47px;height:15px;background:#424242"></div>
<div class="a" style="left:1311px;top:96px;width:47px;height:810px;background:#535353"></div>
<div class="a" style="left:1351px;top:96px;width:7px;height:40px;background:#4a4a4a"></div>
<div class="a" style="left:1358px;top:96px;width:3px;height:810px;background:#383838"></div>
<div class="a" style="left:1361px;top:81px;width:357px;height:825px;background:#4d4d4d"></div>
<div class="a" style="left:1361px;top:81px;width:357px;height:130px;background:#424242"></div>
<svg style="left:1701px;top:85px" width="9" height="5" viewBox="0 0 9 5"><path d="M1.2 0.3 L3.6 2.5 L1.2 4.7 M5.6 0.3 L8 2.5 L5.6 4.7" stroke="#e0e0e0" stroke-width="1.3" fill="none"/></svg>
<div class="a" style="left:1361px;top:96px;width:49px;height:34px;background:#535353"></div>
<div class="a" style="left:1410px;top:96px;width:1px;height:34px;background:#3a3a3a"></div>
<div class="a" style="left:1459px;top:96px;width:1px;height:34px;background:#3a3a3a"></div>
<div class="a" style="left:1509px;top:96px;width:1px;height:34px;background:#3a3a3a"></div>
<div class="a" style="left:1559px;top:96px;width:1px;height:34px;background:#3a3a3a"></div>
<div class="t" style="left:1372px;top:104px;color:#f2f2f2">颜色</div>
<div class="t" style="left:1421px;top:104px;color:#adadad">色板</div>
<div class="t" style="left:1471px;top:104px;color:#adadad">渐变</div>
<div class="t" style="left:1521px;top:104px;color:#adadad">图案</div>
<div class="a" style="left:1701px;top:109px;width:10px;height:7px;background:repeating-linear-gradient(#c8c8c8 0 1px,transparent 1px 2px)"></div>
<div class="a" style="left:1361px;top:130px;width:357px;height:5px;background:#484848;border-top:1px solid #383838;border-bottom:1px solid #383838"></div>
<div class="a" style="left:1505px;top:135px;width:1px;height:35px;background:#3a3a3a"></div>
<div class="t" style="left:1471px;top:144px;color:#adadad">库</div>
<div class="a" style="left:1701px;top:149px;width:10px;height:7px;background:repeating-linear-gradient(#c8c8c8 0 1px,transparent 1px 2px)"></div>
<div class="a" style="left:1361px;top:170px;width:357px;height:5px;background:#484848;border-top:1px solid #383838;border-bottom:1px solid #383838"></div>
<div class="a" style="left:1509px;top:175px;width:1px;height:35px;background:#3a3a3a"></div>
<div class="t" style="left:1471px;top:184px;color:#c4c4c4">路径</div>
<div class="a" style="left:1701px;top:189px;width:10px;height:7px;background:repeating-linear-gradient(#c8c8c8 0 1px,transparent 1px 2px)"></div>
<div class="a" style="left:1361px;top:210px;width:357px;height:117px;background:#535353;border-top:1px solid #383838"></div>
<div class="a" style="left:1361px;top:251px;width:357px;height:1px;background:#3e3e3e"></div>
<div class="a" style="left:1361px;top:287px;width:357px;height:1px;background:#3e3e3e"></div>
<div class="a" style="left:1380px;top:222px;width:92px;height:27px;border:1px solid #5e5e5e;border-radius:3px"></div>
<svg style="left:1493px;top:228px" width="16" height="12" viewBox="0 0 16 12"><rect x="0.7" y="0.7" width="14.6" height="10.6" fill="none" stroke="#8e8e8e" stroke-width="1.4"/><path d="M2.6 9.4 L5.6 5.2 L7.8 7.6 L10.4 4.6 L13.4 9.4 Z" fill="#8e8e8e"/></svg>
<svg style="left:1524px;top:227px" width="14" height="14" viewBox="0 0 14 14"><circle cx="7" cy="7" r="6.2" fill="none" stroke="#8e8e8e" stroke-width="1.4"/><path d="M11.6 2.6 A6.2 6.2 0 0 1 2.6 11.6 Z" fill="#8e8e8e"/></svg>
<svg style="left:1555px;top:228px" width="12" height="13" viewBox="0 0 12 13"><path d="M0.4 0.6 H11.6 V3.8 H10.6 C10.4 2.6 10.2 2.2 9.2 2.2 H7.2 V10.4 C7.2 11.2 7.6 11.4 8.8 11.6 V12.6 H3.2 V11.6 C4.4 11.4 4.8 11.2 4.8 10.4 V2.2 H2.8 C1.8 2.2 1.6 2.6 1.4 3.8 H0.4 Z" fill="#8e8e8e"/></svg>
<svg style="left:1584px;top:227px" width="15" height="15" viewBox="0 0 15 15"><rect x="2.2" y="2.2" width="10.6" height="10.6" fill="none" stroke="#8e8e8e" stroke-width="1.4"/><rect x="0.3" y="0.3" width="3.8" height="3.8" fill="#535353" stroke="#8e8e8e" stroke-width="1"/><rect x="10.9" y="0.3" width="3.8" height="3.8" fill="#535353" stroke="#8e8e8e" stroke-width="1"/><rect x="0.3" y="10.9" width="3.8" height="3.8" fill="#535353" stroke="#8e8e8e" stroke-width="1"/><rect x="10.9" y="10.9" width="3.8" height="3.8" fill="#535353" stroke="#8e8e8e" stroke-width="1"/></svg>
<svg style="left:1615px;top:227px" width="14" height="15" viewBox="0 0 14 15"><path d="M4 0.7 H9.4 L13.2 4.4 V12.4 H7.6 M9.2 0.8 V4.6 H13" fill="none" stroke="#8e8e8e" stroke-width="1.3"/><rect x="0.4" y="7.4" width="7" height="7" fill="#8e8e8e"/></svg>
<div class="a" style="left:1650px;top:224px;width:11px;height:21px;border-radius:6px;background:#4a4a4a"></div>
<div class="a" style="left:1650px;top:223px;width:11px;height:11px;border-radius:50%;background:#8e8e8e"></div>
<div class="a" style="left:1380px;top:259px;width:132px;height:26px;border:1px solid #5e5e5e;border-radius:3px"></div>
<svg style="left:1497px;top:271px" width="8" height="5" viewBox="0 0 8 5"><path d="M0.5 0.5 L4 4 L7.5 0.5" stroke="#6e6e6e" stroke-width="1.2" fill="none"/></svg>
<div class="t" style="left:1521px;top:261px;color:#858585;font-size:15px;letter-spacing:.4px">不透明度:</div>
<div class="a" style="left:1592px;top:259px;width:67px;height:22px;border:1px solid #5c5c5c;border-radius:2px"></div>
<div class="a" style="left:1594px;top:261px;width:41px;height:18px;background:#4a4a4a"></div>
<div class="a" style="left:1640px;top:260px;width:1px;height:20px;background:#5c5c5c"></div>
<div class="t" style="left:1595px;top:262px;font-size:13px;color:#787878">100%</div>
<svg style="left:1646px;top:269px" width="8" height="5" viewBox="0 0 8 5"><path d="M0.5 0.5 L4 4 L7.5 0.5" stroke="#6e6e6e" stroke-width="1.2" fill="none"/></svg>
<svg style="left:1470px;top:298px" width="16" height="16" viewBox="0 0 16 16"><path d="M8 0.2 L10.8 3.6 H8.8 V7.2 H12.4 V5.2 L15.8 8 L12.4 10.8 V8.8 H8.8 V12.4 H10.8 L8 15.8 L5.2 12.4 H7.2 V8.8 H3.6 V10.8 L0.2 8 L3.6 5.2 V7.2 H7.2 V3.6 H5.2 Z" fill="#8e8e8e"/></svg>
<svg style="left:1497px;top:298px" width="18" height="16" viewBox="0 0 18 16"><path d="M0 3.6 H17 M3.6 0 V15 M3.6 12.4 H14 V6.6 L11.2 3.6 M14 14 V15.6 M16 12.4 H17.6" fill="none" stroke="#8e8e8e" stroke-width="1.4"/><path d="M10.4 3.6 L14.4 7.6" stroke="#8e8e8e" stroke-width="1.4"/></svg>
<svg style="left:1526px;top:298px" width="14" height="16" viewBox="0 0 14 16"><path d="M3.6 7 V4.6 C3.6 0.4 10.4 0.4 10.4 4.6 V7" fill="none" stroke="#8e8e8e" stroke-width="1.8"/><rect x="0.6" y="6.6" width="12.8" height="8.8" rx="1" fill="#8e8e8e"/><circle cx="7" cy="11" r="1.3" fill="#535353"/></svg>
<div class="t" style="left:1550px;top:297px;color:#858585;font-size:15px;letter-spacing:.4px">填充:</div>
<div class="a" style="left:1592px;top:295px;width:67px;height:22px;border:1px solid #5c5c5c;border-radius:2px"></div>
<div class="a" style="left:1594px;top:297px;width:41px;height:18px;background:#4a4a4a"></div>
<div class="a" style="left:1640px;top:296px;width:1px;height:20px;background:#5c5c5c"></div>
<div class="t" style="left:1595px;top:298px;font-size:13px;color:#787878">100%</div>
<svg style="left:1646px;top:305px" width="8" height="5" viewBox="0 0 8 5"><path d="M0.5 0.5 L4 4 L7.5 0.5" stroke="#6e6e6e" stroke-width="1.2" fill="none"/></svg>
<div class="a" style="left:1361px;top:327px;width:336px;height:42px;background:#6b6b6b"></div>
<div class="a" style="left:1697px;top:327px;width:21px;height:563px;background:#505050"></div>
<div class="t" style="left:1456px;top:339px;color:#f0f0f0">背景</div>
<svg style="left:1665px;top:340px" width="13" height="16" viewBox="0 0 13 16"><path d="M3.4 6.6 V4.4 C3.4 0.6 9.6 0.6 9.6 4.4 V6.6" fill="none" stroke="#e6e6e6" stroke-width="1.4"/><rect x="0.8" y="6.6" width="11.4" height="8.4" rx="0.8" fill="none" stroke="#e6e6e6" stroke-width="1.5"/><circle cx="6.5" cy="10.8" r="1.3" fill="#e6e6e6"/></svg>
<div class="a" style="left:1361px;top:890px;width:357px;height:16px;background:#535353;border-top:1px solid #3a3a3a;overflow:hidden"><svg style="left:102px;top:10px" width="18" height="9" viewBox="0 0 18 9"><rect x="0.8" y="1.2" width="8.4" height="6.4" rx="3.2" fill="none" stroke="#7c7c7c" stroke-width="1.5"/><rect x="8.8" y="1.2" width="8.4" height="6.4" rx="3.2" fill="none" stroke="#7c7c7c" stroke-width="1.5"/></svg><div class="t" style="left:138px;top:5px;font-size:15px;font-style:italic;color:#7c7c7c">fx</div><svg style="left:171px;top:8px" width="17" height="12" viewBox="0 0 17 12"><rect width="17" height="12" fill="#e2e2e2"/><circle cx="8.5" cy="7" r="3.8" fill="#535353"/></svg><svg style="left:206px;top:8px" width="14" height="14" viewBox="0 0 14 14"><circle cx="7" cy="7" r="6.2" fill="none" stroke="#e0e0e0" stroke-width="1.4"/><path d="M11.6 2.6 A6.2 6.2 0 0 1 2.6 11.6 Z" fill="#e0e0e0"/></svg><svg style="left:239px;top:8px" width="16" height="12" viewBox="0 0 16 12"><path d="M0 0.4 H6 L7.6 2 H16 V12 H0 Z" fill="#dcdcdc"/></svg><svg style="left:272px;top:8px" width="14" height="14" viewBox="0 0 14 14"><rect x="0.8" y="0.8" width="12.4" height="12.4" fill="none" stroke="#e0e0e0" stroke-width="1.5"/><path d="M7 3.4 V10.6 M3.4 7 H10.6" stroke="#e0e0e0" stroke-width="1.5"/></svg><svg style="left:307px;top:8px" width="14" height="14" viewBox="0 0 14 14"><path d="M0 2.6 H14 M4.6 2.6 V0.6 H9.4 V2.6 M1.8 2.6 V13 H12.2 V2.6 M5 5 V11 M7 5 V11 M9 5 V11" fill="none" stroke="#8c8c8c" stroke-width="1.3"/></svg></div>
<!-- MINIDOCK -->
<div class="a" style="left:1304px;top:87px;width:47px;height:60px;background:#535353;border-radius:5px 5px 0 0;box-shadow:0 0 5px 1px rgba(0,0,0,.45)"></div>
<div class="a" style="left:1304px;top:87px;width:47px;height:16px;background:#424242;border-radius:5px 5px 0 0;border-bottom:1px solid #3a3a3a"></div>
<svg style="left:1314px;top:92px" width="9" height="6" viewBox="0 0 9 6"><path d="M1.2 0.4 L3.8 3 L1.2 5.6 M5.4 0.4 L8 3 L5.4 5.6" stroke="#e0e0e0" stroke-width="1.3" fill="none"/></svg>
<svg style="left:1336px;top:91px" width="9" height="9" viewBox="0 0 9 9"><path d="M1 1 L8 8 M8 1 L1 8" stroke="#cfcfcf" stroke-width="2" fill="none"/></svg>
<div class="a" style="left:1345px;top:85px;width:1px;height:1px;background:#eee"></div>
<div class="a" style="left:1349px;top:85px;width:1px;height:2px;background:#eee"></div>
<div class="a" style="left:1315px;top:107px;width:25px;height:5px;background:repeating-linear-gradient(90deg,#3e3e3e 0 1px,transparent 1px 2px)"></div>
<svg style="left:1317px;top:121px" width="19" height="12" viewBox="0 0 19 12"><rect x="0.8" y="0.8" width="5.4" height="5.4" fill="none" stroke="#e0e0e0" stroke-width="1.4"/><rect x="0.2" y="8" width="6.6" height="2" fill="#e0e0e0"/><path d="M10.4 2.4 H17 L15 4.6 L18.4 9 L16.4 10.6 L13 6.4 L10.4 9 Z" fill="#e0e0e0"/></svg>
<!-- BRUSHPANEL -->
<svg width="0" height="0" style="left:0;top:0"><defs>
<filter id="sp" x="0" y="0" width="1" height="1"><feTurbulence type="fractalNoise" baseFrequency="0.85" numOctaves="2" seed="7" result="n"/><feColorMatrix in="n" type="matrix" values="0 0 0 0 0 0 0 0 0 0 0 0 0 0 0 0 0 0 9 -4.1" result="m"/><feComposite in="SourceGraphic" in2="m" operator="in"/></filter>
<filter id="sp2" x="0" y="0" width="1" height="1"><feTurbulence type="fractalNoise" baseFrequency="0.7" numOctaves="2" seed="21" result="n"/><feColorMatrix in="n" type="matrix" values="0 0 0 0 0 0 0 0 0 0 0 0 0 0 0 0 0 0 9 -4.6" result="m"/><feComposite in="SourceGraphic" in2="m" operator="in"/></filter>
<radialGradient id="soft"><stop offset="0" stop-color="#858a8a" stop-opacity=".85"/><stop offset=".55" stop-color="#808484" stop-opacity=".5"/><stop offset="1" stop-color="#808080" stop-opacity="0"/></radialGradient>
</defs></svg>
<div class="a" style="left:1033px;top:130px;width:429px;height:748.5px;background:#535353;border-radius:5px 5px 0 0;box-shadow:0 1px 6px 1px rgba(0,0,0,.42)"></div>
<div class="a" style="left:1033px;top:130px;width:429px;height:52px;background:#424242;border-radius:5px 5px 0 0"></div>
<div class="a" style="left:1033px;top:146px;width:428px;height:1px;background:#383838"></div>
<div class="a" style="left:1033px;top:147px;width:78px;height:35px;background:#535353"></div>
<div class="a" style="left:1111px;top:147px;width:1px;height:34px;background:#3a3a3a"></div>
<div class="a" style="left:1112px;top:181px;width:349px;height:1px;background:#3a3a3a"></div>
<svg style="left:1424px;top:136px" width="9" height="6" viewBox="0 0 9 6"><path d="M3.6 0.4 L1 3 L3.6 5.6 M7.8 0.4 L5.2 3 L7.8 5.6" stroke="#e0e0e0" stroke-width="1.3" fill="none"/></svg>
<svg style="left:1446px;top:135px" width="9" height="9" viewBox="0 0 9 9"><path d="M1 1 L8 8 M8 1 L1 8" stroke="#cfcfcf" stroke-width="2" fill="none"/></svg>
<div class="t" style="left:1045.5px;top:155px;font-size:14px;color:#f0f0f0">画笔设置</div>
<div class="a" style="left:1445px;top:160px;width:10px;height:7px;background:repeating-linear-gradient(#c8c8c8 0 1px,transparent 1px 2px)"></div>
<div class="a" style="left:1078px;top:196px;width:61px;height:28px;background:#434343;border:1px solid #6a6a6a;border-radius:3px"></div>
<div class="t" style="left:1093px;top:201px;font-size:15px;color:#ececec">画笔</div>
<div class="t" style="left:1187.5px;top:198px;font-size:15px;color:#858585">模式:</div>
<div class="a" style="left:1230.5px;top:195.5px;width:132px;height:26px;border:1px solid #5c5c5c;border-radius:3px;background:#4f4f4f"></div>
<div class="t" style="left:1240px;top:198px;font-size:15px;color:#858585">颜色加深</div>
<svg style="left:1349px;top:207px" width="8" height="5" viewBox="0 0 8 5"><path d="M0.5 0.5 L4 4 L7.5 0.5" stroke="#6a6a6a" stroke-width="1.2" fill="none"/></svg>
<div class="a" style="left:1398px;top:200px;width:13px;height:13px;border:1px solid #5e5e5e;border-radius:3px;background:#505050"></div>
<div class="t" style="left:1419px;top:197.5px;font-size:15px;color:#858585">翻转</div>
<div class="a" style="left:1040px;top:236px;width:138px;height:389px;border:1px solid #464646"></div>
<div class="a" style="left:1041px;top:353px;width:136px;height:30px;background:#6b6b6b"></div>
<div class="t" style="left:1041px;top:241px;width:136px;text-align:center;font-size:15px;color:#f0f0f0">画笔笔尖形状</div>
<div class="a" style="left:1043px;top:263px;width:131px;height:1px;background:#464646"></div>
<div class="a" style="left:1043px;top:293px;width:131px;height:1px;background:#464646"></div>
<div class="a" style="left:1043px;top:323px;width:131px;height:1px;background:#464646"></div>
<div class="a" style="left:1043px;top:353px;width:131px;height:1px;background:#464646"></div>
<div class="a" style="left:1043px;top:383px;width:131px;height:1px;background:#464646"></div>
<div class="a" style="left:1043px;top:413px;width:131px;height:1px;background:#464646"></div>
<div class="a" style="left:1043px;top:443px;width:131px;height:1px;background:#464646"></div>
<div class="a" style="left:1043px;top:473px;width:131px;height:1px;background:#464646"></div>
<div class="a" style="left:1056px;top:272px;width:13px;height:13px;border:1px solid #737373;border-radius:3px;background:#454545"></div>
<div class="t" style="left:1078px;top:269px;font-size:15px;color:#ececec">形状动态</div>
<svg style="left:1155px;top:270px" width="14" height="17" viewBox="0 0 14 17"><path d="M4.1 5 V4.3 C4.1 0.5 9.7 0.5 9.7 4.3 V6.6" fill="none" stroke="#dcdcdc" stroke-width="1.4"/><rect x="1.4" y="6.9" width="11.2" height="8.5" fill="none" stroke="#dcdcdc" stroke-width="1.4"/><circle cx="7" cy="11.3" r="1.35" fill="#dcdcdc"/></svg>
<div class="a" style="left:1056px;top:302px;width:13px;height:13px;border:1px solid #737373;border-radius:3px;background:#454545"></div>
<div class="t" style="left:1078px;top:299px;font-size:15px;color:#ececec">散布</div>
<svg style="left:1155px;top:300px" width="14" height="17" viewBox="0 0 14 17"><path d="M4.1 5 V4.3 C4.1 0.5 9.7 0.5 9.7 4.3 V6.6" fill="none" stroke="#dcdcdc" stroke-width="1.4"/><rect x="1.4" y="6.9" width="11.2" height="8.5" fill="none" stroke="#dcdcdc" stroke-width="1.4"/><circle cx="7" cy="11.3" r="1.35" fill="#dcdcdc"/></svg>
<div class="a" style="left:1056px;top:332px;width:13px;height:13px;border:1px solid #737373;border-radius:3px;background:#454545"></div>
<div class="t" style="left:1078px;top:329px;font-size:15px;color:#ececec">纹理</div>
<svg style="left:1155px;top:330px" width="14" height="17" viewBox="0 0 14 17"><path d="M4.1 5 V4.3 C4.1 0.5 9.7 0.5 9.7 4.3 V6.6" fill="none" stroke="#dcdcdc" stroke-width="1.4"/><rect x="1.4" y="6.9" width="11.2" height="8.5" fill="none" stroke="#dcdcdc" stroke-width="1.4"/><circle cx="7" cy="11.3" r="1.35" fill="#dcdcdc"/></svg>
<div class="a" style="left:1056px;top:362px;width:13px;height:13px;border:1px solid #8e8e8e;border-radius:3px;background:#454545"></div>
<div class="t" style="left:1078px;top:359px;font-size:15px;color:#ececec">双重画笔</div>
<svg style="left:1155px;top:360px" width="14" height="17" viewBox="0 0 14 17"><path d="M4.1 5 V4.3 C4.1 0.5 9.7 0.5 9.7 4.3 V6.6" fill="none" stroke="#dcdcdc" stroke-width="1.4"/><rect x="1.4" y="6.9" width="11.2" height="8.5" fill="none" stroke="#dcdcdc" stroke-width="1.4"/><circle cx="7" cy="11.3" r="1.35" fill="#dcdcdc"/></svg>
<div class="a" style="left:1056px;top:392px;width:13px;height:13px;border:1px solid #737373;border-radius:3px;background:#454545"></div>
<div class="t" style="left:1078px;top:389px;font-size:15px;color:#ececec">颜色动态</div>
<svg style="left:1155px;top:390px" width="14" height="17" viewBox="0 0 14 17"><path d="M4.1 5 V4.3 C4.1 0.5 9.7 0.5 9.7 4.3 V6.6" fill="none" stroke="#dcdcdc" stroke-width="1.4"/><rect x="1.4" y="6.9" width="11.2" height="8.5" fill="none" stroke="#dcdcdc" stroke-width="1.4"/><circle cx="7" cy="11.3" r="1.35" fill="#dcdcdc"/></svg>
<div class="a" style="left:1056px;top:422px;width:13px;height:13px;border:1px solid #737373;border-radius:3px;background:#454545"></div>
<div class="t" style="left:1078px;top:419px;font-size:15px;color:#ececec">传递</div>
<svg style="left:1155px;top:420px" width="14" height="17" viewBox="0 0 14 17"><path d="M4.1 5 V4.3 C4.1 0.5 9.7 0.5 9.7 4.3 V6.6" fill="none" stroke="#dcdcdc" stroke-width="1.4"/><rect x="1.4" y="6.9" width="11.2" height="8.5" fill="none" stroke="#dcdcdc" stroke-width="1.4"/><circle cx="7" cy="11.3" r="1.35" fill="#dcdcdc"/></svg>
<div class="a" style="left:1056px;top:452px;width:13px;height:13px;border:1px solid #737373;border-radius:3px;background:#454545"></div>
<div class="t" style="left:1078px;top:449px;font-size:15px;color:#ececec">画笔笔势</div>
<svg style="left:1155px;top:450px" width="14" height="17" viewBox="0 0 14 17"><path d="M4.1 5 V4.3 C4.1 0.5 9.7 0.5 9.7 4.3 V6.6" fill="none" stroke="#dcdcdc" stroke-width="1.4"/><rect x="1.4" y="6.9" width="11.2" height="8.5" fill="none" stroke="#dcdcdc" stroke-width="1.4"/><circle cx="7" cy="11.3" r="1.35" fill="#dcdcdc"/></svg>
<div class="a" style="left:1056px;top:482px;width:13px;height:13px;border:1px solid #737373;border-radius:3px;background:#454545"></div>
<div class="t" style="left:1078px;top:479px;font-size:15px;color:#ececec">杂色</div>
<svg style="left:1155px;top:480px" width="14" height="17" viewBox="0 0 14 17"><path d="M4.1 5 V4.3 C4.1 0.5 9.7 0.5 9.7 4.3 V6.6" fill="none" stroke="#dcdcdc" stroke-width="1.4"/><rect x="1.4" y="6.9" width="11.2" height="8.5" fill="none" stroke="#dcdcdc" stroke-width="1.4"/><circle cx="7" cy="11.3" r="1.35" fill="#dcdcdc"/></svg>
<div class="a" style="left:1056px;top:512px;width:13px;height:13px;border:1px solid #737373;border-radius:3px;background:#454545"></div>
<div class="t" style="left:1078px;top:509px;font-size:15px;color:#ececec">湿边</div>
<svg style="left:1155px;top:510px" width="14" height="17" viewBox="0 0 14 17"><path d="M4.1 5 V4.3 C4.1 0.5 9.7 0.5 9.7 4.3 V6.6" fill="none" stroke="#dcdcdc" stroke-width="1.4"/><rect x="1.4" y="6.9" width="11.2" height="8.5" fill="none" stroke="#dcdcdc" stroke-width="1.4"/><circle cx="7" cy="11.3" r="1.35" fill="#dcdcdc"/></svg>
<div class="a" style="left:1056px;top:542px;width:13px;height:13px;border:1px solid #737373;border-radius:3px;background:#454545"></div>
<div class="t" style="left:1078px;top:539px;font-size:15px;color:#ececec">建立</div>
<svg style="left:1155px;top:540px" width="14" height="17" viewBox="0 0 14 17"><path d="M4.1 5 V4.3 C4.1 0.5 9.7 0.5 9.7 4.3 V6.6" fill="none" stroke="#dcdcdc" stroke-width="1.4"/><rect x="1.4" y="6.9" width="11.2" height="8.5" fill="none" stroke="#dcdcdc" stroke-width="1.4"/><circle cx="7" cy="11.3" r="1.35" fill="#dcdcdc"/></svg>
<div class="a" style="left:1056px;top:572px;width:13px;height:13px;border-radius:3px;background:#e6e6e6"></div>
<svg style="left:1056px;top:572px" width="13" height="13" viewBox="0 0 13 13"><path d="M2.8 6.6 L5.4 9.4 L10.2 3.6" stroke="#2c2c2c" stroke-width="2" fill="none"/></svg>
<div class="t" style="left:1078px;top:569px;font-size:15px;color:#ececec">平滑</div>
<svg style="left:1155px;top:570px" width="14" height="17" viewBox="0 0 14 17"><path d="M4.1 5 V4.3 C4.1 0.5 9.7 0.5 9.7 4.3 V6.6" fill="none" stroke="#dcdcdc" stroke-width="1.4"/><rect x="1.4" y="6.9" width="11.2" height="8.5" fill="none" stroke="#dcdcdc" stroke-width="1.4"/><circle cx="7" cy="11.3" r="1.35" fill="#dcdcdc"/></svg>
<div class="a" style="left:1056px;top:602px;width:13px;height:13px;border:1px solid #737373;border-radius:3px;background:#454545"></div>
<div class="t" style="left:1078px;top:599px;font-size:15px;color:#ececec">保护纹理</div>
<svg style="left:1155px;top:600px" width="14" height="17" viewBox="0 0 14 17"><path d="M4.1 5 V4.3 C4.1 0.5 9.7 0.5 9.7 4.3 V6.6" fill="none" stroke="#dcdcdc" stroke-width="1.4"/><rect x="1.4" y="6.9" width="11.2" height="8.5" fill="none" stroke="#dcdcdc" stroke-width="1.4"/><circle cx="7" cy="11.3" r="1.35" fill="#dcdcdc"/></svg>
<div class="a" style="left:1191px;top:232px;width:260px;height:235px;border-top:1px solid #3c3c3c;border-left:1px solid #3c3c3c;background:#535353"></div>
<div class="a" style="left:1192px;top:233px;width:240px;height:200px;background:#4f4f4f"></div>
<div class="a" style="left:1432px;top:233px;width:19px;height:234px;background:#4b4b4b"></div>
<div class="a" style="left:1193px;top:234px;width:39px;height:39px;background:#575757"></div>
<svg style="left:1193px;top:233.5px" width="39" height="26" viewBox="0 0 39 26"><circle cx="19.5" cy="12" r="11.5" fill="url(#soft)"/></svg>
<div class="t" style="left:1193px;top:258.1px;width:39px;text-align:center;font-size:12.4px;color:#7e7e7e">30</div>
<div class="a" style="left:1233px;top:234px;width:39px;height:39px;background:#575757"></div>
<svg style="left:1233px;top:233.5px" width="39" height="26" viewBox="0 0 39 26"><circle cx="19.5" cy="12" r="10.3" fill="#828282"/></svg>
<div class="t" style="left:1233px;top:258.1px;width:39px;text-align:center;font-size:12.4px;color:#7e7e7e">123</div>
<div class="a" style="left:1273px;top:234px;width:39px;height:39px;background:#575757"></div>
<svg style="left:1273px;top:233.5px" width="39" height="26" viewBox="0 0 39 26"><path d="M17 11 L19 10 L19.6 8.4 L20.6 10 L22.6 10.4 L21.2 12 L21.8 14.4 L19.8 13.2 L17.6 14 L18.4 12.2 Z" fill="#828282"/></svg>
<div class="t" style="left:1273px;top:258.1px;width:39px;text-align:center;font-size:12.4px;color:#7e7e7e">8</div>
<div class="a" style="left:1313px;top:234px;width:39px;height:39px;background:#575757"></div>
<svg style="left:1313px;top:233.5px" width="39" height="26" viewBox="0 0 39 26"><ellipse cx="19.5" cy="12" rx="3.4" ry="3.9" fill="#828282"/></svg>
<div class="t" style="left:1313px;top:258.1px;width:39px;text-align:center;font-size:12.4px;color:#7e7e7e">10</div>
<div class="a" style="left:1353px;top:234px;width:39px;height:39px;background:#575757"></div>
<svg style="left:1353px;top:233.5px" width="39" height="26" viewBox="0 0 39 26"><path d="M8 3 L13 6 L14 1 L17 5 L21 1 L22 5 L28 2 L27 6 L32 7 L27 10 L31 14 L25 13 L24 18 L20 15 L16 22 L15 16 L9 17 L12 12 L7 9 L12 8 Z" fill="#828282" opacity=".55"/><path d="M8 3 L13 6 L14 1 L17 5 L21 1 L22 5 L28 2 L27 6 L32 7 L27 10 L31 14 L25 13 L24 18 L20 15 L16 22 L15 16 L9 17 L12 12 L7 9 L12 8 Z" fill="#828282" filter="url(#sp)"/><path d="M12 6 L27 6 L26 12 L17 15 L13 11 Z" fill="#828282" opacity=".7"/></svg>
<div class="t" style="left:1353px;top:258.1px;width:39px;text-align:center;font-size:12.4px;color:#7e7e7e">25</div>
<div class="a" style="left:1393px;top:234px;width:39px;height:39px;background:#575757"></div>
<svg style="left:1393px;top:233.5px" width="39" height="26" viewBox="0 0 39 26"><path d="M9 3 L30 2 L31 8 L29 12 L30 18 L14 19 L12 15 L9 12 L11 8 Z" fill="#828282" filter="url(#sp)"/></svg>
<div class="t" style="left:1393px;top:258.1px;width:39px;text-align:center;font-size:12.4px;color:#7e7e7e">112</div>
<div class="a" style="left:1193px;top:274px;width:39px;height:39px;background:#575757"></div>
<svg style="left:1193px;top:273.5px" width="39" height="26" viewBox="0 0 39 26"><circle cx="19.5" cy="12" r="11" fill="#828282" filter="url(#sp)"/><circle cx="19.5" cy="12" r="10" fill="#828282" opacity=".35"/></svg>
<div class="t" style="left:1193px;top:297.0px;width:39px;text-align:center;font-size:12.4px;color:#7e7e7e">60</div>
<div class="a" style="left:1233px;top:274px;width:39px;height:39px;background:#575757"></div>
<svg style="left:1233px;top:273.5px" width="39" height="26" viewBox="0 0 39 26"><ellipse cx="19.5" cy="12.5" rx="15.5" ry="10.5" fill="#828282" opacity=".55"/><ellipse cx="19.5" cy="12.5" rx="15.5" ry="10.5" fill="#828282" filter="url(#sp)"/></svg>
<div class="t" style="left:1233px;top:297.0px;width:39px;text-align:center;font-size:12.4px;color:#7e7e7e">50</div>
<div class="a" style="left:1273px;top:274px;width:39px;height:39px;background:#575757"></div>
<svg style="left:1273px;top:273.5px" width="39" height="26" viewBox="0 0 39 26"><path d="M14 6 C17 2 22 3 24 1 C27 0 27 4 27 8 C28 13 27 16 24 19 C22 23 17 24 14 22 C11 19 12 15 10 12 C9 9 11 7 14 6 Z" fill="#828282"/></svg>
<div class="t" style="left:1273px;top:297.0px;width:39px;text-align:center;font-size:12.4px;color:#7e7e7e">25</div>
<div class="a" style="left:1313px;top:274px;width:39px;height:39px;background:#575757"></div>
<svg style="left:1313px;top:273.5px" width="39" height="26" viewBox="0 0 39 26"><circle cx="19.5" cy="12" r="9.6" fill="#7a7a7a" opacity=".9"/><circle cx="19.5" cy="12" r="10.5" fill="#7a7a7a" filter="url(#sp)" opacity=".6"/></svg>
<div class="t" style="left:1313px;top:297.0px;width:39px;text-align:center;font-size:12.4px;color:#7e7e7e">30</div>
<div class="a" style="left:1353px;top:274px;width:39px;height:39px;background:#575757"></div>
<svg style="left:1353px;top:273.5px" width="39" height="26" viewBox="0 0 39 26"><path d="M8 4 L14 2 L17 6 L24 5 L30 9 L35 8 L34 15 L31 20 L25 18 L20 21 L14 17 L9 15 L4 11 L9 9 Z" fill="#828282" filter="url(#sp)"/><path d="M10 6 L28 9 L32 14 L24 17 L12 13 Z" fill="#828282" opacity=".35"/></svg>
<div class="t" style="left:1353px;top:297.0px;width:39px;text-align:center;font-size:12.4px;color:#7e7e7e">50</div>
<div class="a" style="left:1393px;top:274px;width:39px;height:39px;background:#575757"></div>
<svg style="left:1393px;top:273.5px" width="39" height="26" viewBox="0 0 39 26"><path d="M8 4 L14 2 L17 6 L24 5 L30 9 L35 8 L34 15 L31 20 L25 18 L20 21 L14 17 L9 15 L4 11 L9 9 Z" fill="#828282" filter="url(#sp)"/><path d="M10 6 L28 9 L32 14 L24 17 L12 13 Z" fill="#828282" opacity=".35"/></svg>
<div class="t" style="left:1393px;top:297.0px;width:39px;text-align:center;font-size:12.4px;color:#7e7e7e">60</div>
<div class="a" style="left:1193px;top:314px;width:39px;height:39px;background:#575757"></div>
<svg style="left:1193px;top:313.5px" width="39" height="26" viewBox="0 0 39 26"><path d="M16 4 C18 2 22 2 24 5 C26 10 26 16 24 21 C22 23 17 23 15 20 C14 15 14 8 16 4 Z" fill="#787878"/></svg>
<div class="t" style="left:1193px;top:337.0px;width:39px;text-align:center;font-size:12.4px;color:#7e7e7e">100</div>
<div class="a" style="left:1233px;top:314px;width:39px;height:39px;background:#575757"></div>
<svg style="left:1233px;top:313.5px" width="39" height="26" viewBox="0 0 39 26"><path d="M12 2 L28 1 L31 6 L16 8 L28 10 L33 14 L18 15 L30 17 L32 21 L18 22 L14 18 L8 16 L12 12 L6 9 L12 6 Z" fill="#828282" filter="url(#sp)"/><path d="M12 3 L28 3 L28 6 L12 6 Z M10 10 L30 11 L30 14 L10 13 Z M16 18 L31 18 L31 21 L16 21 Z" fill="#828282" opacity=".35"/></svg>
<div class="t" style="left:1233px;top:337.0px;width:39px;text-align:center;font-size:12.4px;color:#7e7e7e">127</div>
<div class="a" style="left:1273px;top:314px;width:39px;height:39px;background:#575757"></div>
<svg style="left:1273px;top:313.5px" width="39" height="26" viewBox="0 0 39 26"><g fill="#828282"><circle cx="11.9" cy="5.8" r="0.7"/><circle cx="29.3" cy="8.8" r="0.8"/><circle cx="27.0" cy="13.2" r="0.8"/><circle cx="12.3" cy="3.8" r="0.4"/><circle cx="14.7" cy="12.8" r="0.6"/><circle cx="18.9" cy="11.8" r="0.4"/><circle cx="17.2" cy="22.2" r="0.7"/><circle cx="25.5" cy="19.9" r="0.4"/><circle cx="17.2" cy="10.3" r="0.3"/><circle cx="22.5" cy="9.3" r="0.4"/><circle cx="31.2" cy="10.9" r="0.4"/><circle cx="27.7" cy="10.3" r="0.6"/><circle cx="23.0" cy="22.1" r="0.6"/><circle cx="31.3" cy="9.9" r="0.4"/><circle cx="17.1" cy="14.4" r="0.4"/><circle cx="24.7" cy="13.9" r="0.6"/><circle cx="29.4" cy="12.2" r="0.5"/><circle cx="15.3" cy="20.9" r="0.5"/><circle cx="16.4" cy="18.0" r="0.7"/><circle cx="31.5" cy="15.8" r="0.3"/><circle cx="19.5" cy="2.2" r="0.3"/><circle cx="21.0" cy="6.7" r="0.6"/><circle cx="21.0" cy="12.1" r="0.4"/><circle cx="23.5" cy="11.0" r="0.7"/><circle cx="30.8" cy="7.5" r="0.5"/><circle cx="14.4" cy="17.5" r="0.7"/><circle cx="27.8" cy="17.6" r="0.7"/><circle cx="20.3" cy="11.2" r="0.8"/><circle cx="24.6" cy="14.8" r="0.6"/><circle cx="24.8" cy="9.5" r="0.8"/><circle cx="14.0" cy="10.6" r="0.5"/><circle cx="20.5" cy="13.7" r="0.4"/><circle cx="14.7" cy="1.8" r="0.4"/><circle cx="31.8" cy="15.3" r="0.6"/><circle cx="15.6" cy="14.2" r="0.6"/><circle cx="23.0" cy="6.4" r="0.5"/><circle cx="31.0" cy="15.5" r="0.3"/><circle cx="8.0" cy="12.4" r="0.4"/><circle cx="18.1" cy="1.5" r="0.6"/><circle cx="20.1" cy="9.8" r="0.5"/><circle cx="26.3" cy="19.9" r="0.4"/><circle cx="7.1" cy="15.2" r="0.7"/><circle cx="26.9" cy="11.0" r="0.5"/><circle cx="18.5" cy="5.5" r="0.4"/><circle cx="16.7" cy="13.6" r="0.5"/><circle cx="32.1" cy="11.2" r="0.6"/></g></svg>
<div class="t" style="left:1273px;top:337.0px;width:39px;text-align:center;font-size:12.4px;color:#7e7e7e">284</div>
<div class="a" style="left:1313px;top:314px;width:39px;height:39px;background:#575757"></div>
<svg style="left:1313px;top:313.5px" width="39" height="26" viewBox="0 0 39 26"><g fill="#828282"><circle cx="8" cy="2.6" r="1.1"/><circle cx="11" cy="1.6" r="1.3"/><circle cx="33" cy="5.6" r="1"/><circle cx="26" cy="10.6" r="1.2"/><circle cx="13.4" cy="13" r="0.8"/><circle cx="25" cy="21.4" r="1.5"/></g></svg>
<div class="t" style="left:1313px;top:337.0px;width:39px;text-align:center;font-size:12.4px;color:#7e7e7e">80</div>
<div class="a" style="left:1353px;top:314px;width:39px;height:39px;background:#575757"></div>
<svg style="left:1353px;top:313.5px" width="39" height="26" viewBox="0 0 39 26"><path d="M4 3 L35 2 L36 8 L34 14 L35 20 L18 21 L16 16 L10 14 L12 9 L4 6 Z" fill="#828282" filter="url(#sp)"/><path d="M5 3.5 H34 V5 H5 Z" fill="#828282" opacity=".7"/></svg>
<div class="t" style="left:1353px;top:337.0px;width:39px;text-align:center;font-size:12.4px;color:#7e7e7e">174</div>
<div class="a" style="left:1393px;top:314px;width:39px;height:39px;background:#575757"></div>
<svg style="left:1393px;top:313.5px" width="39" height="26" viewBox="0 0 39 26"><rect x="7" y="2" width="26" height="20" fill="#6a6a6a" filter="url(#sp2)" opacity=".5"/></svg>
<div class="t" style="left:1393px;top:337.0px;width:39px;text-align:center;font-size:12.4px;color:#7e7e7e">175</div>
<div class="a" style="left:1193px;top:354px;width:39px;height:39px;background:#575757"></div>
<svg style="left:1193px;top:353.5px" width="39" height="26" viewBox="0 0 39 26"><g fill="#828282"><ellipse cx="12" cy="5" rx="2.6" ry="1.4" transform="rotate(-30 12 5)"/><ellipse cx="17" cy="3" rx="2.6" ry="1.4" transform="rotate(20 17 3)"/><ellipse cx="22" cy="6" rx="2.6" ry="1.4" transform="rotate(-20 22 6)"/><ellipse cx="26" cy="4" rx="2.6" ry="1.4" transform="rotate(30 26 4)"/><ellipse cx="10" cy="11" rx="2.6" ry="1.4" transform="rotate(10 10 11)"/><ellipse cx="15" cy="10" rx="2.6" ry="1.4" transform="rotate(-40 15 10)"/><ellipse cx="20" cy="12" rx="2.6" ry="1.4" transform="rotate(30 20 12)"/><ellipse cx="25" cy="10" rx="2.6" ry="1.4" transform="rotate(-10 25 10)"/><ellipse cx="29" cy="13" rx="2.6" ry="1.4" transform="rotate(40 29 13)"/><ellipse cx="13" cy="17" rx="2.6" ry="1.4" transform="rotate(30 13 17)"/><ellipse cx="18" cy="18" rx="2.6" ry="1.4" transform="rotate(-20 18 18)"/><ellipse cx="23" cy="17" rx="2.6" ry="1.4" transform="rotate(20 23 17)"/><ellipse cx="18" cy="22" rx="2.6" ry="1.4" transform="rotate(0 18 22)"/><ellipse cx="27" cy="7" rx="2.6" ry="1.4" transform="rotate(-30 27 7)"/></g></svg>
<div class="t" style="left:1193px;top:377.0px;width:39px;text-align:center;font-size:12.4px;color:#7e7e7e">306</div>
<div class="a" style="left:1233px;top:354px;width:39px;height:39px;background:#575757"></div>
<svg style="left:1233px;top:353.5px" width="39" height="26" viewBox="0 0 39 26"><circle cx="19.5" cy="12" r="10.3" fill="#828282"/></svg>
<div class="t" style="left:1233px;top:377.0px;width:39px;text-align:center;font-size:12.4px;color:#7e7e7e">50</div>
<div class="a" style="left:1273px;top:354px;width:39px;height:39px;background:#575757"></div>
<svg style="left:1273px;top:353.5px" width="39" height="26" viewBox="0 0 39 26"><g fill="#828282"><circle cx="15.8" cy="12.0" r="0.3"/><circle cx="18.6" cy="18.7" r="0.6"/><circle cx="15.1" cy="17.2" r="0.6"/><circle cx="17.5" cy="6.4" r="0.6"/><circle cx="15.4" cy="16.7" r="0.4"/><circle cx="12.9" cy="12.6" r="0.6"/><circle cx="17.4" cy="19.4" r="0.6"/><circle cx="19.2" cy="11.8" r="0.5"/><circle cx="19.5" cy="18.1" r="0.5"/><circle cx="21.9" cy="6.6" r="0.6"/><circle cx="16.1" cy="16.8" r="0.6"/><circle cx="21.3" cy="8.6" r="0.6"/><circle cx="23.7" cy="7.5" r="0.7"/><circle cx="24.4" cy="10.6" r="0.5"/><circle cx="23.0" cy="18.1" r="0.7"/><circle cx="13.4" cy="12.9" r="0.6"/><circle cx="19.2" cy="9.7" r="0.6"/><circle cx="14.2" cy="9.1" r="0.5"/><circle cx="14.7" cy="7.3" r="0.6"/><circle cx="19.4" cy="11.4" r="0.4"/><circle cx="14.0" cy="14.1" r="0.4"/><circle cx="17.2" cy="6.7" r="0.3"/><circle cx="16.7" cy="12.5" r="0.3"/><circle cx="21.9" cy="14.7" r="0.4"/><circle cx="19.8" cy="12.7" r="0.5"/><circle cx="15.4" cy="15.9" r="0.5"/><circle cx="20.1" cy="19.4" r="0.3"/><circle cx="16.8" cy="13.8" r="0.5"/><circle cx="24.8" cy="16.7" r="0.4"/><circle cx="25.0" cy="13.3" r="0.3"/><circle cx="15.9" cy="10.9" r="0.5"/><circle cx="26.2" cy="10.2" r="0.5"/><circle cx="21.8" cy="6.6" r="0.4"/><circle cx="23.0" cy="16.3" r="0.5"/></g></svg>
<div class="t" style="left:1273px;top:377.0px;width:39px;text-align:center;font-size:12.4px;color:#7e7e7e">16</div>
<div class="a" style="left:1313px;top:354px;width:39px;height:39px;background:#575757"></div>
<svg style="left:1313px;top:353.5px" width="39" height="26" viewBox="0 0 39 26"><path d="M9 3 L30 2 L31 8 L29 12 L30 18 L14 19 L12 15 L9 12 L11 8 Z" fill="#828282" filter="url(#sp)"/></svg>
<div class="t" style="left:1313px;top:377.0px;width:39px;text-align:center;font-size:12.4px;color:#7e7e7e">80</div>
<div class="a" style="left:1353px;top:354px;width:39px;height:39px;background:#575757"></div>
<svg style="left:1353px;top:353.5px" width="39" height="26" viewBox="0 0 39 26"><circle cx="19.5" cy="12" r="11" fill="#828282" filter="url(#sp2)"/><circle cx="19.5" cy="12" r="6" fill="#828282" filter="url(#sp)"/></svg>
<div class="t" style="left:1353px;top:377.0px;width:39px;text-align:center;font-size:12.4px;color:#7e7e7e">25</div>
<div class="a" style="left:1393px;top:354px;width:39px;height:39px;background:#575757"></div>
<svg style="left:1393px;top:353.5px" width="39" height="26" viewBox="0 0 39 26"><path d="M14 3 C18 0 25 2 27 6 C30 10 28 16 25 19 C22 23 17 22 14 18 C10 14 10 7 14 3 Z" fill="#828282" filter="url(#sp)"/><path d="M15 6 C18 4 23 5 25 9 C26 13 23 17 20 18 C16 17 13 11 15 6 Z" fill="#828282" opacity=".3"/></svg>
<div class="t" style="left:1393px;top:377.0px;width:39px;text-align:center;font-size:12.4px;color:#7e7e7e">120</div>
<div class="a" style="left:1193px;top:394px;width:39px;height:39px;background:#575757"></div>
<svg style="left:1193px;top:393.5px" width="39" height="26" viewBox="0 0 39 26"><g fill="#828282"><circle cx="31.8" cy="9.1" r="0.6"/><circle cx="12.4" cy="20.2" r="0.3"/><circle cx="26.3" cy="16.6" r="0.6"/><circle cx="25.5" cy="18.2" r="0.7"/><circle cx="14.4" cy="16.3" r="0.4"/><circle cx="16.2" cy="22.4" r="0.5"/><circle cx="31.3" cy="9.5" r="0.6"/><circle cx="18.7" cy="22.8" r="0.5"/><circle cx="14.5" cy="14.5" r="0.8"/><circle cx="14.1" cy="12.2" r="0.5"/><circle cx="26.2" cy="17.5" r="0.5"/><circle cx="16.6" cy="20.9" r="0.7"/><circle cx="27.8" cy="12.6" r="0.4"/><circle cx="29.5" cy="8.3" r="0.4"/><circle cx="19.1" cy="15.0" r="0.8"/><circle cx="17.0" cy="19.5" r="0.5"/><circle cx="13.9" cy="5.9" r="0.7"/><circle cx="27.4" cy="18.1" r="0.5"/><circle cx="13.6" cy="10.9" r="0.4"/><circle cx="12.0" cy="10.8" r="0.5"/><circle cx="19.2" cy="4.4" r="0.3"/><circle cx="19.4" cy="18.3" r="0.8"/><circle cx="26.0" cy="7.3" r="0.3"/><circle cx="20.8" cy="6.0" r="0.6"/><circle cx="17.0" cy="4.3" r="0.5"/><circle cx="25.2" cy="9.0" r="0.5"/><circle cx="22.0" cy="9.2" r="0.4"/><circle cx="20.4" cy="10.6" r="0.7"/><circle cx="17.0" cy="6.2" r="0.4"/><circle cx="21.8" cy="1.9" r="0.4"/><circle cx="11.0" cy="13.0" r="0.5"/><circle cx="17.8" cy="14.6" r="0.6"/><circle cx="20.3" cy="10.4" r="0.4"/><circle cx="24.2" cy="3.5" r="0.6"/><circle cx="29.7" cy="13.4" r="0.8"/><circle cx="29.6" cy="11.9" r="0.3"/><circle cx="22.0" cy="8.8" r="0.6"/><circle cx="29.3" cy="9.4" r="0.4"/><circle cx="16.3" cy="22.0" r="0.4"/><circle cx="14.1" cy="8.2" r="0.4"/><circle cx="18.5" cy="11.1" r="0.4"/><circle cx="18.0" cy="13.2" r="0.3"/><circle cx="10.1" cy="7.9" r="0.7"/><circle cx="24.3" cy="16.6" r="0.5"/><circle cx="13.1" cy="8.1" r="0.8"/><circle cx="18.3" cy="13.0" r="0.6"/></g></svg>
<div class="t" style="left:1193px;top:417.0px;width:39px;text-align:center;font-size:12.4px;color:#7e7e7e">283</div>
<div class="a" style="left:1233px;top:394px;width:39px;height:39px;background:#575757"></div>
<svg style="left:1233px;top:393.5px" width="39" height="26" viewBox="0 0 39 26"><g fill="#828282"><circle cx="8" cy="2.6" r="1.1"/><circle cx="11" cy="1.6" r="1.3"/><circle cx="33" cy="5.6" r="1"/><circle cx="26" cy="10.6" r="1.2"/><circle cx="13.4" cy="13" r="0.8"/><circle cx="25" cy="21.4" r="1.5"/></g></svg>
<div class="t" style="left:1233px;top:417.0px;width:39px;text-align:center;font-size:12.4px;color:#7e7e7e">105</div>
<div class="a" style="left:1273px;top:394px;width:39px;height:39px;background:#575757"></div>
<svg style="left:1273px;top:393.5px" width="39" height="26" viewBox="0 0 39 26"><circle cx="19.5" cy="12" r="0.9" fill="#828282"/></svg>
<div class="t" style="left:1273px;top:417.0px;width:39px;text-align:center;font-size:12.4px;color:#7e7e7e">3</div>
<div class="a" style="left:1313px;top:394px;width:39px;height:39px;background:#575757"></div>
<svg style="left:1313px;top:393.5px" width="39" height="26" viewBox="0 0 39 26"><circle cx="19.5" cy="12" r="10.5" fill="url(#soft)"/></svg>
<div class="t" style="left:1313px;top:417.0px;width:39px;text-align:center;font-size:12.4px;color:#7e7e7e">21</div>
<div class="a" style="left:1353px;top:394px;width:39px;height:39px;background:#575757"></div>
<svg style="left:1353px;top:393.5px" width="39" height="26" viewBox="0 0 39 26"><circle cx="19.5" cy="12" r="11.5" fill="url(#soft)"/></svg>
<div class="t" style="left:1353px;top:417.0px;width:39px;text-align:center;font-size:12.4px;color:#7e7e7e">25</div>
<div class="a" style="left:1393px;top:394px;width:39px;height:39px;background:#575757"></div>
<svg style="left:1393px;top:393.5px" width="39" height="26" viewBox="0 0 39 26"><circle cx="19.5" cy="12" r="10.3" fill="#828282"/></svg>
<div class="t" style="left:1393px;top:417.0px;width:39px;text-align:center;font-size:12.4px;color:#7e7e7e">30</div>
<div class="t" style="left:1190px;top:481px;font-size:15px;color:#7e7e7e">大小</div>
<div class="a" style="left:1370px;top:476px;width:81px;height:26px;border:1px solid #5e5e5e"></div>
<div class="a" style="left:1373px;top:479px;width:75px;height:20px;background:#464646"></div>
<div class="a" style="left:1193px;top:512px;width:255px;height:3px;background:#636363"></div>
<div class="t" style="left:1190px;top:539px;font-size:15px;color:#7e7e7e">间距</div>
<div class="a" style="left:1370px;top:535px;width:81px;height:26px;border:1px solid #5e5e5e"></div>
<div class="a" style="left:1373px;top:538px;width:75px;height:20px;background:#464646"></div>
<div class="a" style="left:1193px;top:570px;width:255px;height:3px;background:#636363"></div>
<div class="t" style="left:1190px;top:597px;font-size:15px;color:#7e7e7e">散布</div>
<div class="a" style="left:1370px;top:592px;width:81px;height:26px;border:1px solid #5e5e5e"></div>
<div class="a" style="left:1373px;top:595px;width:75px;height:20px;background:#464646"></div>
<div class="a" style="left:1193px;top:627px;width:255px;height:3px;background:#636363"></div>
<div class="t" style="left:1190px;top:654px;font-size:15px;color:#7e7e7e">数量</div>
<div class="a" style="left:1370px;top:650px;width:81px;height:26px;border:1px solid #5e5e5e"></div>
<div class="a" style="left:1373px;top:653px;width:75px;height:20px;background:#464646"></div>
<div class="a" style="left:1193px;top:685px;width:255px;height:3px;background:#636363"></div>
<div class="a" style="left:1268px;top:598px;width:13px;height:13px;border:1px solid #5e5e5e;border-radius:3px;background:#4c4c4c"></div>
<div class="t" style="left:1289.5px;top:597px;font-size:15px;color:#7e7e7e">两轴</div>
<div class="a" style="left:1039px;top:703px;width:416px;height:127px;background:#777;border:1px solid #444"></div>
<svg style="left:1040px;top:704px" width="414" height="125" viewBox="1040 704 414 125"><path d="M1082.2 766.6 C1109.4 757.2 1135.4 748.2 1165.6 748.2 C1194.4 748.2 1219.2 757.1 1245.2 766.2 C1271.1 775.6 1295.9 784.8 1324.7 784.8 C1355.7 784.8 1382.5 775.9 1410.4 766.6" fill="none" stroke="#fff" stroke-width="26.4" stroke-linecap="round"/></svg>
<div class="a" style="left:1033px;top:836px;width:428px;height:1px;background:#3e3e3e"></div>
<div class="a" style="left:1033px;top:868px;width:428px;height:2px;background:#3a3a3a"></div>
<div class="a" style="left:1033px;top:877px;width:428px;height:1px;background:#3e3e3e"></div>
<svg style="left:1411px;top:845px" width="14" height="14" viewBox="0 0 14 14"><rect x="0.8" y="0.8" width="12.2" height="12.4" fill="none" stroke="#e6e6e6" stroke-width="1.5"/><path d="M6.9 3.8 V10.2 M3.7 7 H10.1" stroke="#e6e6e6" stroke-width="1.4"/></svg>
<div class="a" style="left:1235px;top:871px;width:25px;height:4px;background:repeating-linear-gradient(90deg,#3e3e3e 0 1px,transparent 1px 2px)"></div>
<div class="a" style="left:1033px;top:130px;width:429px;height:748.5px;border:1px solid #3c3c3c;border-top-color:#404040;border-radius:5px 5px 0 0"></div>
</div>
</body>
</html>
